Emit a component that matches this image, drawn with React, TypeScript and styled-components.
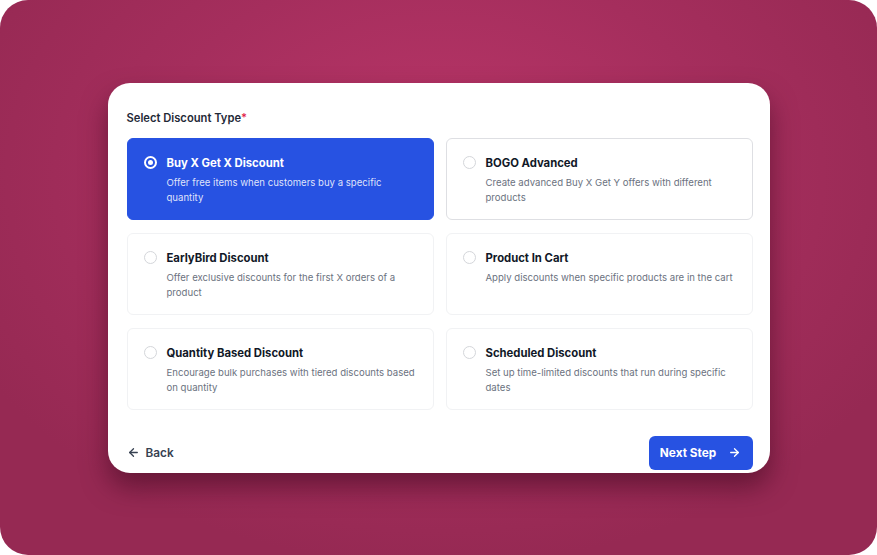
import React, { useState } from "react";
import styled, { createGlobalStyle } from "styled-components";

const Global = createGlobalStyle`
  html, body { margin: 0; padding: 0; background: #ffffff; }
  body { font-family: Inter, "Noto Sans", "Liberation Sans", sans-serif; -webkit-font-smoothing: antialiased; }
  * { box-sizing: border-box; }
`;

const Stage = styled.div`
  width: 877px;
  height: 555px;
  border-radius: 28px;
  background: radial-gradient(ellipse 60% 70% at 50% 32%, #bb3669 0%, #a52e5d 55%, #962953 100%);
  display: flex;
  align-items: center;
  justify-content: center;
  overflow: hidden;
`;

const Card = styled.div`
  width: 662px;
  height: 390px;
  background: #ffffff;
  border-radius: 22px;
  padding: 27px 17px 3px 19px;
  display: flex;
  flex-direction: column;
  box-shadow: 0 14px 26px rgba(60, 8, 30, 0.55);
`;

const Label = styled.div`
  font-size: 11.2px;
  font-weight: 600;
  color: #1f2937;
  line-height: 16px;
  margin-bottom: 12px;
  span { color: #e11d48; }
`;

const Grid = styled.div`
  display: grid;
  grid-template-columns: 307px 307px;
  column-gap: 12px;
  row-gap: 13px;
`;

const Option = styled.button<{ $selected: boolean; $strong: boolean }>`
  all: unset;
  box-sizing: border-box;
  cursor: pointer;
  height: 82px;
  border-radius: 6px;
  padding: 16px 17px 0 16px;
  display: flex;
  gap: 10px;
  align-items: flex-start;
  background: ${(p) => (p.$selected ? "#2752e2" : "#ffffff")};
  border: 1px solid ${(p) => (p.$selected ? "#2752e2" : p.$strong ? "#dedfe3" : "#f1f2f4")};
`;

const Radio = styled.span<{ $selected: boolean }>`
  flex: none;
  width: 13px;
  height: 13px;
  margin-top: 1.5px;
  border-radius: 50%;
  display: flex;
  align-items: center;
  justify-content: center;
  border: ${(p) => (p.$selected ? "2px solid #ffffff" : "1.5px solid #d4d6da")};
  background: ${(p) => (p.$selected ? "transparent" : "#ffffff")};
  &::after {
    content: "";
    display: ${(p) => (p.$selected ? "block" : "none")};
    width: 5px;
    height: 5px;
    border-radius: 50%;
    background: #ffffff;
  }
`;

const Texts = styled.div`
  display: flex;
  flex-direction: column;
  gap: 4px;
`;

const Title = styled.div<{ $selected: boolean }>`
  font-size: 11.3px;
  font-weight: 700;
  line-height: 16px;
  color: ${(p) => (p.$selected ? "#ffffff" : "#111827")};
`;

const Desc = styled.div<{ $selected: boolean }>`
  font-size: 9.6px;
  line-height: 15px;
  color: ${(p) => (p.$selected ? "rgba(255,255,255,0.86)" : "#6b7280")};
  max-width: 252px;
`;

const Footer = styled.div`
  margin-top: auto;
  display: flex;
  align-items: center;
  justify-content: space-between;
`;

const BackButton = styled.button`
  all: unset;
  box-sizing: border-box;
  cursor: pointer;
  display: flex;
  align-items: center;
  gap: 6px;
  font-size: 11.8px;
  font-weight: 600;
  color: #374151;
`;

const NextButton = styled.button`
  all: unset;
  box-sizing: border-box;
  cursor: pointer;
  width: 104px;
  height: 34px;
  border-radius: 6px;
  background: #2752e2;
  color: #ffffff;
  font-size: 11.8px;
  font-weight: 700;
  display: flex;
  align-items: center;
  justify-content: center;
  gap: 12px;
`;

const options = [
  { title: "Buy X Get X Discount", desc: "Offer free items when customers buy a specific quantity" },
  { title: "BOGO Advanced", desc: "Create advanced Buy X Get Y offers with different products" },
  { title: "EarlyBird Discount", desc: "Offer exclusive discounts for the first X orders of a product" },
  { title: "Product In Cart", desc: "Apply discounts when specific products are in the cart" },
  { title: "Quantity Based Discount", desc: "Encourage bulk purchases with tiered discounts based on quantity" },
  { title: "Scheduled Discount", desc: "Set up time-limited discounts that run during specific dates" },
];

const Arrow = ({ dir }: { dir: "left" | "right" }) => (
  <svg width="13" height="13" viewBox="0 0 24 24" fill="none" stroke="currentColor" strokeWidth="2.4" strokeLinecap="round" strokeLinejoin="round">
    {dir === "left" ? (
      <>
        <path d="M19 12H5" />
        <path d="M12 19l-7-7 7-7" />
      </>
    ) : (
      <>
        <path d="M5 12h14" />
        <path d="M12 5l7 7-7 7" />
      </>
    )}
  </svg>
);

export default function App() {
  const [selected, setSelected] = useState(0);
  return (
    <>
      <Global />
      <Stage>
        <Card>
          <Label>
            Select Discount Type<span>*</span>
          </Label>
          <Grid>
            {options.map((o, i) => (
              <Option key={o.title} $selected={selected === i} $strong={i === 1} onClick={() => setSelected(i)}>
                <Radio $selected={selected === i} />
                <Texts>
                  <Title $selected={selected === i}>{o.title}</Title>
                  <Desc $selected={selected === i}>{o.desc}</Desc>
                </Texts>
              </Option>
            ))}
          </Grid>
          <Footer>
            <BackButton>
              <Arrow dir="left" />
              Back
            </BackButton>
            <NextButton>
              Next Step
              <Arrow dir="right" />
            </NextButton>
          </Footer>
        </Card>
      </Stage>
    </>
  );
}
